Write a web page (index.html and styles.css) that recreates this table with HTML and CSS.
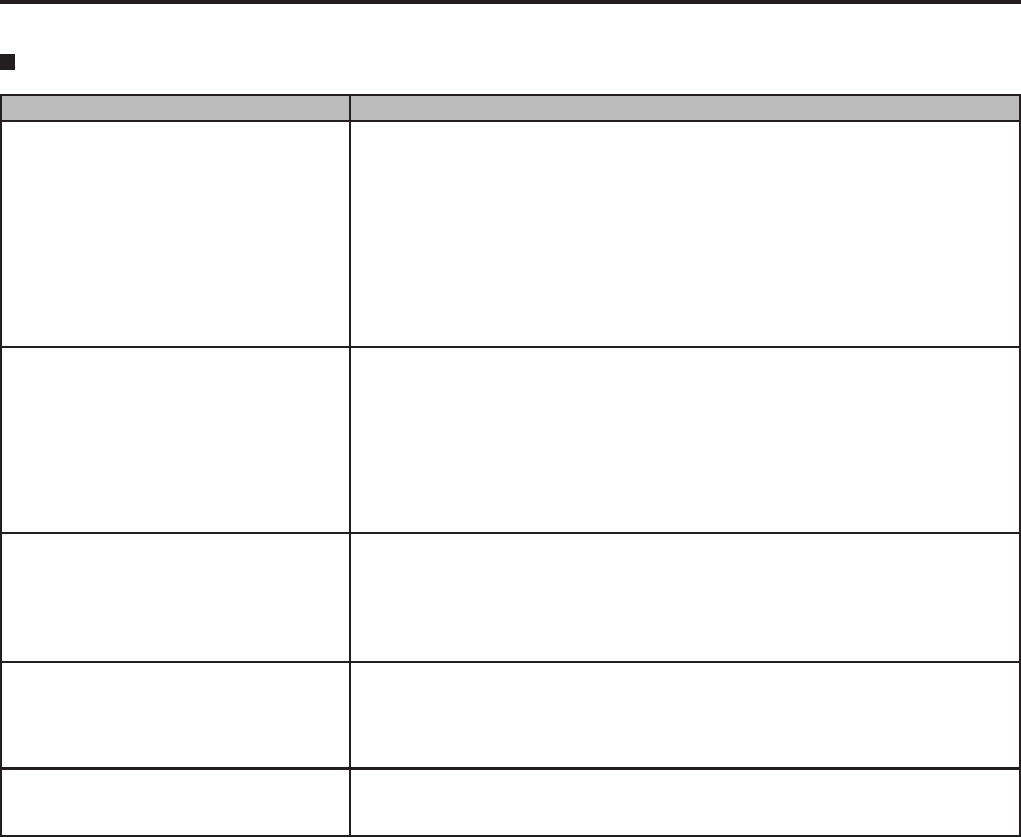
FILE: index.html
```html
<!DOCTYPE html>
<html lang="en">
<head>
<meta charset="utf-8">
<title>Table</title>
<link rel="stylesheet" href="styles.css">
</head>
<body>
<div class="topbar"></div>
<div class="heading"><span class="mark"></span></div>
<div class="table">
  <div class="row head"><div class="cell first"></div><div class="cell"></div></div>
  <div class="row r1"><div class="cell first"></div><div class="cell"></div></div>
  <div class="row r2"><div class="cell first"></div><div class="cell"></div></div>
  <div class="row r3"><div class="cell first"></div><div class="cell"></div></div>
  <div class="row r4"><div class="cell first"></div><div class="cell"></div></div>
  <div class="row r5 thick"><div class="cell first"></div><div class="cell"></div></div>
</div>
</body>
</html>
```
FILE: styles.css
```css
html, body {
  margin: 0;
  padding: 0;
  background: #ffffff;
  font-family: "Liberation Sans", Arial, sans-serif;
}
.topbar {
  height: 4px;
  background: #231f20;
}
.heading {
  display: flex;
  align-items: center;
  margin-top: 50px;
  height: 16px;
}
.mark {
  display: block;
  width: 15px;
  height: 16px;
  background: #231f20;
}
.table {
  margin-top: 24px;
  width: 1021px;
  box-sizing: border-box;
  border: 2px solid #231f20;
}
.row {
  display: grid;
  grid-template-columns: 349px 1fr;
  border-top: 2px solid #231f20;
}
.row.head {
  border-top: none;
  background: #bcbcbc;
  height: 24px;
}
.row.thick {
  border-top: 3px solid #231f20;
}
.cell.first {
  border-right: 2px solid #231f20;
}
.r1 { height: 224px; }
.r2 { height: 184px; }
.r3 { height: 127px; }
.r4 { height: 104px; }
.r5 { height: 65px; }
```
